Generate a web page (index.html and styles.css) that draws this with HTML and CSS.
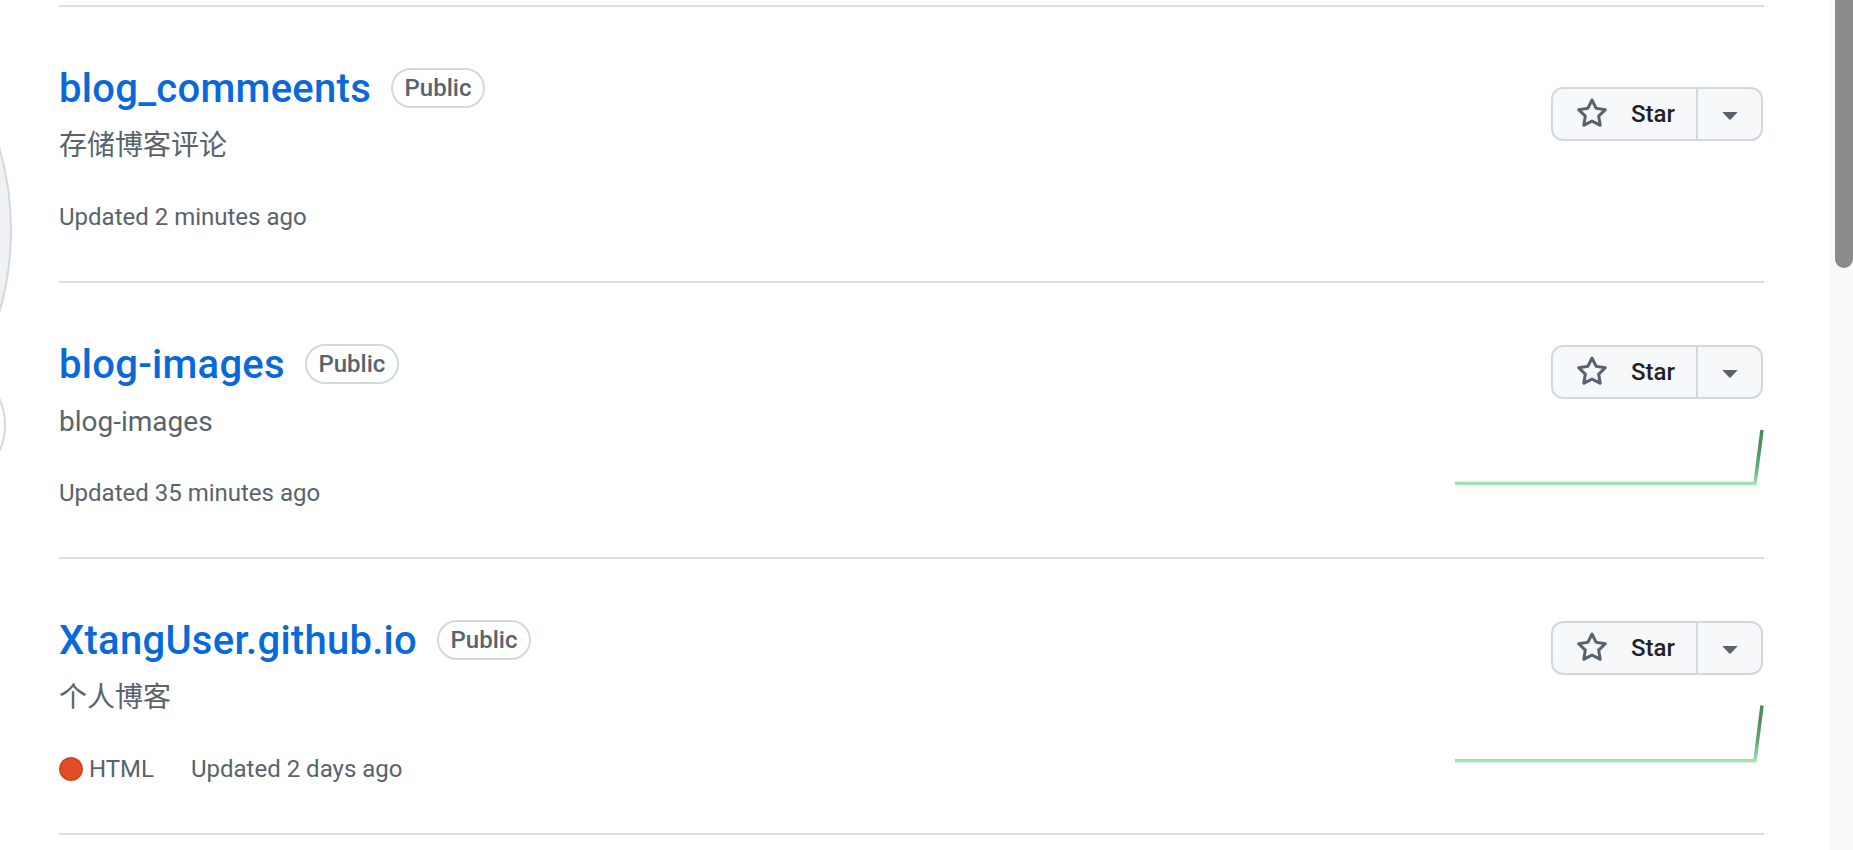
FILE: index.html
```html
<!DOCTYPE html>
<html lang="zh-CN">
<head>
<meta charset="utf-8">
<title>Repositories</title>
<link rel="stylesheet" href="styles.css">
</head>
<body>
<div class="viewport">
  <div class="page">
    <aside class="sidebar">
      <div class="avatar"></div>
      <div class="status-badge"></div>
    </aside>

    <ul class="repo-list">
      <li class="repo">
        <div class="repo-info">
          <div class="repo-title">
            <a class="repo-name" href="#">blog_commeents</a>
            <span class="label">Public</span>
          </div>
          <p class="repo-desc">存储博客评论</p>
          <div class="repo-meta">
            <span>Updated 2 minutes ago</span>
          </div>
        </div>
        <div class="repo-actions">
          <div class="star-btn">
            <span class="star-main">
              <svg class="icon" viewBox="0 0 16 16" width="32" height="32"><path d="M8 .25a.75.75 0 0 1 .673.418l1.882 3.815 4.21.612a.75.75 0 0 1 .416 1.279l-3.046 2.97.719 4.192a.751.751 0 0 1-1.088.791L8 12.347l-3.766 1.98a.75.75 0 0 1-1.088-.79l.72-4.194L.818 6.374a.75.75 0 0 1 .416-1.28l4.21-.611L7.327.668A.75.75 0 0 1 8 .25Zm0 2.445L6.615 5.5a.75.75 0 0 1-.564.41l-3.097.45 2.24 2.184a.75.75 0 0 1 .216.664l-.528 3.084 2.769-1.456a.75.75 0 0 1 .698 0l2.77 1.456-.53-3.084a.75.75 0 0 1 .216-.664l2.24-2.183-3.096-.45a.75.75 0 0 1-.564-.41L8 2.694Z"/></svg>
              <span class="star-text">Star</span>
            </span>
            <span class="star-caret">
              <svg class="icon" viewBox="0 0 16 16" width="32" height="32"><path d="m4.427 7.427 3.396 3.396a.25.25 0 0 0 .354 0l3.396-3.396A.25.25 0 0 0 11.396 7H4.604a.25.25 0 0 0-.177.427Z"/></svg>
            </span>
          </div>
          <div class="repo-activity"></div>
        </div>
      </li>

      <li class="repo">
        <div class="repo-info">
          <div class="repo-title">
            <a class="repo-name" href="#">blog-images</a>
            <span class="label">Public</span>
          </div>
          <p class="repo-desc">blog-images</p>
          <div class="repo-meta">
            <span>Updated 35 minutes ago</span>
          </div>
        </div>
        <div class="repo-actions">
          <div class="star-btn">
            <span class="star-main">
              <svg class="icon" viewBox="0 0 16 16" width="32" height="32"><path d="M8 .25a.75.75 0 0 1 .673.418l1.882 3.815 4.21.612a.75.75 0 0 1 .416 1.279l-3.046 2.97.719 4.192a.751.751 0 0 1-1.088.791L8 12.347l-3.766 1.98a.75.75 0 0 1-1.088-.79l.72-4.194L.818 6.374a.75.75 0 0 1 .416-1.28l4.21-.611L7.327.668A.75.75 0 0 1 8 .25Zm0 2.445L6.615 5.5a.75.75 0 0 1-.564.41l-3.097.45 2.24 2.184a.75.75 0 0 1 .216.664l-.528 3.084 2.769-1.456a.75.75 0 0 1 .698 0l2.77 1.456-.53-3.084a.75.75 0 0 1 .216-.664l2.24-2.183-3.096-.45a.75.75 0 0 1-.564-.41L8 2.694Z"/></svg>
              <span class="star-text">Star</span>
            </span>
            <span class="star-caret">
              <svg class="icon" viewBox="0 0 16 16" width="32" height="32"><path d="m4.427 7.427 3.396 3.396a.25.25 0 0 0 .354 0l3.396-3.396A.25.25 0 0 0 11.396 7H4.604a.25.25 0 0 0-.177.427Z"/></svg>
            </span>
          </div>
          <div class="repo-activity">
            <svg class="sparkline" width="310" height="72" viewBox="0 0 310 72">
              <defs>
                <linearGradient id="spark-a" gradientUnits="userSpaceOnUse" x1="0" y1="73" x2="0" y2="18">
                  <stop offset="0" stop-color="#a6e6b3"/>
                  <stop offset="0.12" stop-color="#86cf97"/>
                  <stop offset="0.35" stop-color="#62a874"/>
                  <stop offset="0.7" stop-color="#4e9062"/>
                  <stop offset="1" stop-color="#488a5b"/>
                </linearGradient>
              </defs>
              <path d="M1 71.5 H301 L308 18" fill="none" stroke="url(#spark-a)" stroke-width="3.5"/>
            </svg>
          </div>
        </div>
      </li>

      <li class="repo">
        <div class="repo-info">
          <div class="repo-title">
            <a class="repo-name" href="#">XtangUser.github.io</a>
            <span class="label">Public</span>
          </div>
          <p class="repo-desc">个人博客</p>
          <div class="repo-meta">
            <span class="lang-dot"></span>
            <span class="lang">HTML</span>
            <span>Updated 2 days ago</span>
          </div>
        </div>
        <div class="repo-actions">
          <div class="star-btn">
            <span class="star-main">
              <svg class="icon" viewBox="0 0 16 16" width="32" height="32"><path d="M8 .25a.75.75 0 0 1 .673.418l1.882 3.815 4.21.612a.75.75 0 0 1 .416 1.279l-3.046 2.97.719 4.192a.751.751 0 0 1-1.088.791L8 12.347l-3.766 1.98a.75.75 0 0 1-1.088-.79l.72-4.194L.818 6.374a.75.75 0 0 1 .416-1.28l4.21-.611L7.327.668A.75.75 0 0 1 8 .25Zm0 2.445L6.615 5.5a.75.75 0 0 1-.564.41l-3.097.45 2.24 2.184a.75.75 0 0 1 .216.664l-.528 3.084 2.769-1.456a.75.75 0 0 1 .698 0l2.77 1.456-.53-3.084a.75.75 0 0 1 .216-.664l2.24-2.183-3.096-.45a.75.75 0 0 1-.564-.41L8 2.694Z"/></svg>
              <span class="star-text">Star</span>
            </span>
            <span class="star-caret">
              <svg class="icon" viewBox="0 0 16 16" width="32" height="32"><path d="m4.427 7.427 3.396 3.396a.25.25 0 0 0 .354 0l3.396-3.396A.25.25 0 0 0 11.396 7H4.604a.25.25 0 0 0-.177.427Z"/></svg>
            </span>
          </div>
          <div class="repo-activity">
            <svg class="sparkline" width="310" height="72" viewBox="0 0 310 72">
              <defs>
                <linearGradient id="spark-b" gradientUnits="userSpaceOnUse" x1="0" y1="73" x2="0" y2="16">
                  <stop offset="0" stop-color="#a6e6b3"/>
                  <stop offset="0.12" stop-color="#86cf97"/>
                  <stop offset="0.35" stop-color="#62a874"/>
                  <stop offset="0.7" stop-color="#4e9062"/>
                  <stop offset="1" stop-color="#488a5b"/>
                </linearGradient>
              </defs>
              <path d="M1 72.8 H301 L308 17.5" fill="none" stroke="url(#spark-b)" stroke-width="3.5"/>
            </svg>
          </div>
        </div>
      </li>
    </ul>
  </div>
  <div class="scrollbar"><div class="scrollbar-thumb"></div></div>
</div>
</body>
</html>
```
FILE: styles.css
```css
* { box-sizing: border-box; }

html, body {
  margin: 0;
  padding: 0;
  height: 850px;
  overflow: hidden;
  background: #ffffff;
}

body {
  font-family: Roboto, "Noto Sans CJK SC", sans-serif;
  color: #1f2328;
}

.viewport {
  display: flex;
  height: 850px;
}

.page {
  flex: 1;
  display: flex;
  align-items: flex-start;
  overflow: hidden;
  background: #ffffff;
}

/* ---------- left sidebar (avatar, mostly off-screen) ---------- */
.sidebar {
  flex: none;
  position: relative;
  width: 592px;
  margin-left: -580px;
  margin-top: -66px;
}

.avatar {
  width: 592px;
  height: 592px;
  border-radius: 50%;
  border: 2px solid #d1d9e0;
  background: #eff1f3;
}

.status-badge {
  position: absolute;
  left: 460px;
  top: 428px;
  width: 126px;
  height: 126px;
  border-radius: 50%;
  border: 2px solid #d1d9e0;
  background: #ffffff;
}

/* ---------- repository list ---------- */
.repo-list {
  flex: none;
  width: 1705px;
  margin: 5px 0 0 47px;
  padding: 0;
  list-style: none;
  border-bottom: 2px solid #d8dee4;
}

.repo {
  display: flex;
  border-top: 2px solid #d8dee4;
  padding: 57px 0 46px;
  height: 276px;
}

.repo-info {
  flex: 1;
  min-width: 0;
}

.repo-title {
  display: flex;
  align-items: center;
  height: 50px;
}

.repo-name {
  display: block;
  font-size: 40px;
  line-height: 50px;
  font-weight: 500;
  letter-spacing: 0.27px;
  color: #0969da;
  text-decoration: none;
  white-space: nowrap;
}

.label {
  margin: 0 0 3px 20px;
  height: 40px;
  padding: 0 11.5px;
  border: 2px solid #d1d9e0;
  border-radius: 40px;
  font-size: 24px;
  line-height: 36px;
  font-weight: 500;
  color: #59636e;
  white-space: nowrap;
}

.repo-desc {
  margin: 11px 0 0;
  height: 42px;
  font-size: 28px;
  line-height: 42px;
  color: #59636e;
}

.repo-meta {
  display: flex;
  align-items: center;
  margin-top: 32px;
  height: 36px;
  font-size: 24px;
  line-height: 36px;
  color: #59636e;
  white-space: nowrap;
}

.lang-dot {
  width: 24px;
  height: 24px;
  border-radius: 50%;
  background: #e34c26;
  border: 2px solid rgba(31, 35, 40, 0.1);
  margin-right: 6px;
}

.lang {
  margin-right: 37px;
}

/* ---------- right actions ---------- */
.repo-actions {
  flex: none;
  width: 320px;
  display: flex;
  flex-direction: column;
  align-items: flex-end;
  justify-content: space-around;
  margin-top: -1px;
  padding-bottom: 21px;
}

.star-btn {
  display: flex;
  height: 54px;
  border: 2px solid #d1d9e0;
  border-radius: 12px;
  background: #f6f8fa;
  margin-right: 1px;
}

.star-main {
  display: flex;
  align-items: center;
  padding: 0 21px 0 23px;
}

.star-text {
  margin-left: 23px;
  font-size: 24px;
  line-height: 1;
  font-weight: 500;
  color: #1f2328;
}

.star-caret {
  display: flex;
  align-items: center;
  justify-content: center;
  width: 65px;
  border-left: 2px solid #d1d9e0;
}

.icon {
  display: block;
  fill: #59636e;
}

.repo-activity {
  height: 0;
}

.repo-activity:not(:empty) {
  height: 72px;
}

.sparkline {
  display: block;
  overflow: visible;
}

/* ---------- window scrollbar ---------- */
.scrollbar {
  flex: none;
  width: 24px;
  height: 850px;
  background: #f9f9f9;
}

.scrollbar-thumb {
  margin-left: 6px;
  width: 18px;
  height: 268px;
  background: #8b8b8b;
  border-radius: 0 0 9px 9px;
}
```
